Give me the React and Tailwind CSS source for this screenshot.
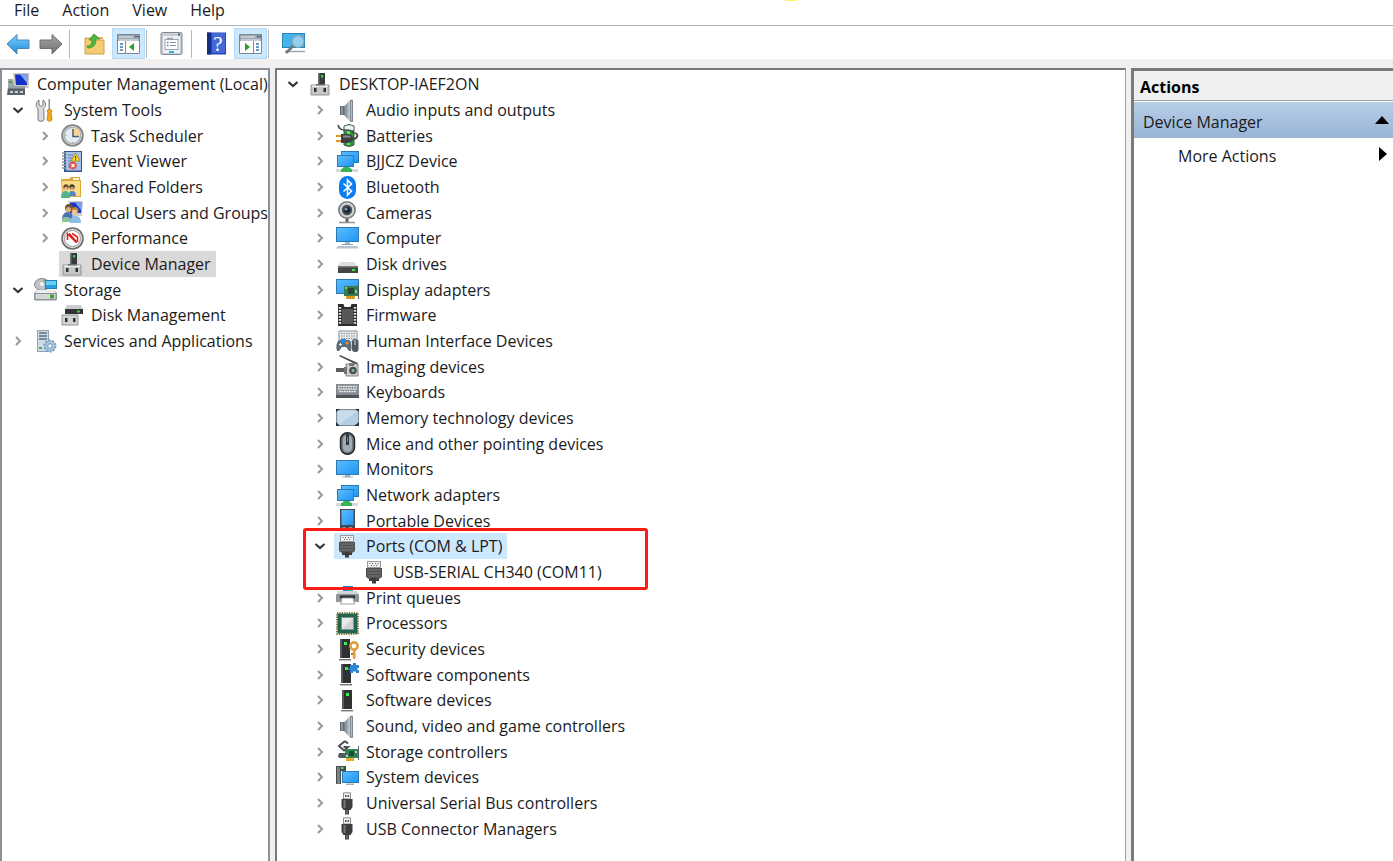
import React, { useState } from "react";

const Svg = ({ children }) => (
  <svg viewBox="0 0 23 23" className="size-[23px] shrink-0" aria-hidden="true">
    {children}
  </svg>
);

const Screen = ({ x, y, w, h }) => (
  <g>
    <rect x={x} y={y} width={w} height={h} fill="#2a7ab4" />
    <rect x={x + 1} y={y + 1} width={w - 2} height={h - 2} fill="url(#screenBlue)" />
  </g>
);

const Tower = ({ x = 6, y = 1 }) => (
  <g>
    <rect x={x} y={y} width="10" height="19" fill="#2f3133" />
    <path d={`M${x} ${y}h2v19h-2z`} fill="#55585a" />
    <rect x={x + 4} y={y + 3} width="3" height="3" fill="#3df04a" />
    <path d={`M${x - 1} ${y + 20}h12v1.400h-12z`} fill="#6f7375" />
  </g>
);

const NetScreens = () => (
  <Svg>
    <Screen x={5} y={1} w={18} h={12} />
    <Screen x={1} y={5} w={17} h={12} />
    <path d="M8 17h4v3H8z" fill="#2fa84a" />
    <path d="M0 19h22v3H0z" fill="#d5dad7" />
    <path d="M5 19.500 8 17h5l3 2.500V22H5z" fill="#38b555" />
  </Svg>
);

const PortPlug = () => (
  <Svg>
    <rect x="4.500" y=".5" width="13" height="6" fill="#efefef" stroke="#9a9a9a" />
    <path d="M6.500 2h1v1h-1zM9 2h1v1h-1zM12 2h1v1h-1zM14.500 2h1v1h-1zM8 4h1v1H8zM10.500 4h1v1h-1zM13 4h1v1h-1z" fill="#666" />
    <path d="M3 7h16v9l-3 2H6l-3-2z" fill="#505050" />
    <path d="M4 9h14M4 12h14M4 15h14" stroke="#7b7b7b" />
    <path d="M6 18h3v2H6zM13 18h3v2h-3zM9 17h4v5.500H9z" fill="#3b3b3b" />
  </Svg>
);

const UsbPlug = () => (
  <Svg>
    <path d="M7.500.8h7V7h-7z" fill="#f2f2f2" stroke="#8a8a8a" />
    <path d="M9 3h1.500v2H9zM11.500 3H13v2h-1.500z" fill="#555" />
    <path d="M5.500 7h11v8l-2 3h-1.500v4.500H9V18H7.500l-2-3z" fill="#3c3d3f" />
    <path d="M7.500 8h2v8h-2z" fill="#737577" />
    <path d="M10 18h2v4h-2z" fill="#66686a" />
  </Svg>
);

const Speaker = () => (
  <Svg>
    <path d="M4 7h4v9H4z" fill="#5f6a74" />
    <path d="M5 7.500h2v8H5z" fill="#8b97a1" />
    <path d="M8 7.500 14 1v21.500L8 16z" fill="url(#metal)" />
    <path d="M14 .8h3v22h-3z" fill="#7a858f" />
    <path d="M14.800 2h1.200v19.500h-1.200z" fill="#b3bcc4" />
  </Svg>
);

const icons = {
  computerManagement: (
    <Svg>
      <path d="M6 0h16.500l-1 15H8z" fill="#c9c9c2" />
      <path d="M8 1.500h12.500L20 12H9z" fill="#1430c8" />
      <path d="M13 1.500h7.500L20 10z" fill="#7fa6f5" />
      <path d="M1 6h5l2 8H1z" fill="#a3a9a8" />
      <path d="M2 8h3v2H2z" fill="#35b32f" />
      <path d="M1 14h17v8H0z" fill="#58636b" />
      <path d="M1 13h17v2.500H1z" fill="#98a3a8" />
      <path d="M3 18h3v2H3zM8 18h3v2H8zM13 18h3v2h-3z" fill="#cbd3d5" />
    </Svg>
  ),
  tools: (
    <Svg>
      <path d="M5 1v5l2 1.500L9 6V1c3 2 3.500 6 .8 8.500L10 21c-1 1.800-5 1.800-6 0V10C1 7 2 3 5 1z" fill="#d8dadc" stroke="#777c80" />
      <path d="M14.500 0H16v11h-1.500z" fill="#8b9196" />
      <path d="M13 12c0-2 5-2 5 0l-1 2 1 6c0 3-5 3-5 0l1-6z" fill="#f5a915" stroke="#bf7a0a" strokeWidth=".8" />
    </Svg>
  ),
  clock: (
    <Svg>
      <circle cx="11.500" cy="11.500" r="10.500" fill="#c4c5c5" stroke="#828485" strokeWidth="1.600" />
      <circle cx="11.500" cy="11.500" r="8" fill="#e3ecf5" stroke="#a6a8a9" />
      <path d="M11.500 3.500a8 8 0 0 1 8 8h-8z" fill="#f6d594" />
      <path d="M12 5v7.500h6" fill="none" stroke="#4a6172" strokeWidth="1.500" />
      <path d="M11 18h1v1h-1zM4.500 11h1v1h-1z" fill="#8796a2" />
    </Svg>
  ),
  event: (
    <Svg>
      <path d="M3 1h18v21H3z" fill="#34558f" />
      <path d="M5 2h15v18.500H5z" fill="#a6c0e6" />
      <path d="M7 5h5M7 8h5M7 11h5M7 14h3M7 17h3" stroke="#6484b4" />
      <path d="M1 3h4M1 6h4M1 9h4M1 12h4M1 15h4M1 18h4" stroke="#8e9498" strokeWidth="1.400" />
      <path d="m14.500 3 4.500 8H10z" fill="#ffd728" stroke="#a68912" strokeWidth=".8" />
      <path d="M14 6h1v2.500h-1zM14 9.300h1v1h-1z" fill="#333" />
      <circle cx="12" cy="15.500" r="3.800" fill="#e2504b" />
      <path d="m10.500 14 3 3m0-3-3 3" stroke="#fff" strokeWidth="1.200" />
    </Svg>
  ),
  shared: (
    <Svg>
      <path d="M0 3h8l2-2h9v3h1v17H1z" fill="#d9a73d" />
      <path d="M1 5h18v15H2z" fill="#fbdc86" />
      <path d="M12 2h6v2h-6z" fill="#fff4c6" />
      <circle cx="5" cy="11" r="2.700" fill="#6b4a2c" />
      <circle cx="5" cy="12.500" r="1.800" fill="#e8b78b" />
      <circle cx="11" cy="11" r="2.700" fill="#403b35" />
      <circle cx="11" cy="12.500" r="1.800" fill="#dca378" />
      <path d="M8 20c0-4 1-5 3-5s4 1 4 5z" fill="#4f88c9" />
      <path d="M0 22c0-5 2-7 4.500-7S9 17 9 22z" fill="#52b68b" />
    </Svg>
  ),
  users: (
    <Svg>
      <path d="M7 0h15l-1 15H9z" fill="#d0cfc6" />
      <path d="M9 1.500h11.500L20 12H9z" fill="#1735ce" />
      <path d="M14 1.500h6.500L20 9z" fill="#7ba4f4" />
      <circle cx="8" cy="7" r="4" fill="#6f5232" />
      <circle cx="7.500" cy="8.500" r="2.600" fill="#dfae7b" />
      <circle cx="14" cy="9.500" r="3.500" fill="#b98531" />
      <circle cx="13.500" cy="11" r="2.500" fill="#edc598" />
      <path d="M1 19c0-5 2-8 6-8s5 3 5 8z" fill="#4a71b5" />
      <path d="M1 21c0-4 1-5 4-5s5 1 5 5z" fill="#8fc49a" />
      <path d="M9 22c0-5 2-7 5.500-7s5.500 2 5.500 7z" fill="#8bbfe6" />
    </Svg>
  ),
  perf: (
    <Svg>
      <circle cx="11.500" cy="11.500" r="10.500" fill="#dedede" stroke="#6e6e6e" strokeWidth="1.600" />
      <circle cx="11.500" cy="11.500" r="8" fill="#fff" stroke="#9a9a9a" />
      <path d="M6.500 13V7l9 8.500M11 6.500l5.500 3.500v5" fill="none" stroke="#e32518" strokeWidth="1.600" />
      <path d="m8 6.500 8 9" stroke="#d81a12" strokeWidth="1.800" />
    </Svg>
  ),
  device: (
    <Svg>
      <path d="M2 12h18v10H2z" fill="#c4c6c7" stroke="#929596" />
      <path d="M3 12.500h16V14H3z" fill="#eceded" />
      <path d="M5 15h2.500v4H5zM14.500 15H17v4h-2.500z" fill="#2f3132" />
      <rect x="9" y="0" width="7" height="12" fill="#393c3d" />
      <path d="M9 0h1.500v12H9z" fill="#6f7375" />
      <path d="M7 11h9v1.500H7z" fill="#6c7072" />
      <rect x="12" y="2" width="2" height="2.500" fill="#38d843" />
    </Svg>
  ),
  storage: (
    <Svg>
      <ellipse cx="8" cy="6.500" rx="7.500" ry="6" fill="#bfc3c5" stroke="#85898b" />
      <circle cx="8" cy="6" r="2" fill="#f5f5f5" />
      <path d="m9 1 3 1-3 4z" fill="#88bf7d" />
      <path d="M11 2h12v9H11z" fill="#1b83b9" />
      <path d="M12 3h10v7H12z" fill="#6ccdf3" />
      <path d="M12 7h10v3H12z" fill="#2aa1dd" />
      <path d="M3 12h17l3 3v6q0 1.500-1.500 1.500h-20Q0 22.500 0 21v-6z" fill="#8f9496" />
      <path d="M3 12h17l2 3H1z" fill="#eceeee" />
      <path d="M1.500 16h20v5h-20z" fill="#d4d7d8" />
      <path d="M16 16.500h4v4h-4z" fill="#41a22a" />
    </Svg>
  ),
  diskMgmt: (
    <Svg>
      <path d="M6 1h14l2 4H4z" fill="#c9cccd" />
      <path d="M4 5h18v5H4z" fill="#313435" />
      <path d="M16 6.500h3v2h-3z" fill="#36cf3d" />
      <path d="M1 11h16v10H1z" fill="#d0d2d3" stroke="#929596" />
      <path d="M4 14h2.500v4H4zM12 14h2.500v4H12z" fill="#303234" />
    </Svg>
  ),
  services: (
    <Svg>
      <path d="M3 0h12v22H3z" fill="#8fa3b5" />
      <path d="M4 1h10v20H4z" fill="#cfdce6" />
      <path d="M5 3h8M5 6h8M5 9h8" stroke="#5b6f82" strokeWidth="1.400" />
      <path d="M5 17h3v2H5z" fill="#3db34c" />
      <circle cx="16" cy="16" r="5.500" fill="#a9c7e4" stroke="#7ea0be" strokeWidth="2" strokeDasharray="2.200 1.200" />
      <circle cx="16" cy="16" r="2.300" fill="#edf4fa" stroke="#6c95bb" />
    </Svg>
  ),
  speaker: <Speaker />,
  battery: (
    <Svg>
      <path d="M8 2q5-3 10 0v19q-5 3-10 0z" fill="#239a35" stroke="#4b534d" />
      <path d="M8.500 2.500q4.500-2.500 9 0V6q-4.500 1-9 0z" fill="#eef2ef" />
      <path d="M11 7h3v14h-3z" fill="#68dc6d" />
      <path d="M2 1c1 5 5 5 8 5s7 0 8 4" fill="none" stroke="#4a4a4a" strokeWidth="1.600" />
      <path d="M0 12h6M0 17h6" stroke="#d89b25" strokeWidth="2" />
      <path d="M5 10h5c5 0 7 2 7 4.500S15 19 10 19H5z" fill="#3d3f40" />
      <path d="M7 11.500h4c3 0 4 1 4 2H7z" fill="#8b8d8f" />
      <path d="M16 15c6 0 7-5 3-6" fill="none" stroke="#444" strokeWidth="1.800" />
    </Svg>
  ),
  net: <NetScreens />,
  bluetooth: (
    <Svg>
      <rect x="3" y="0" width="17" height="23" rx="8.500" fill="#0a7cf5" />
      <path d="m7.500 7.500 8 7.500-4 4V4l4 4-8 7.500" fill="none" stroke="#fff" strokeWidth="1.600" />
    </Svg>
  ),
  camera: (
    <Svg>
      <circle cx="11" cy="9" r="8.200" fill="#d0d1d1" stroke="#777a7b" strokeWidth="1.600" />
      <circle cx="11" cy="9" r="5.200" fill="#454b52" />
      <circle cx="11" cy="9" r="3" fill="#18202c" />
      <circle cx="10" cy="8" r="1.600" fill="#7b9cc6" />
      <path d="M9.500 17.500h3V21h-3z" fill="#606364" />
      <path d="M3 21.500h16" stroke="#8e9191" strokeWidth="1.500" />
    </Svg>
  ),
  computer: (
    <Svg>
      <Screen x={0} y={0} w={23} h={15} />
      <path d="M9 15h5v2H9z" fill="#a9bac9" />
      <path d="M6 17h11v1H6z" fill="#8fa2b3" />
      <path d="M2 19h19l2 2.500H0z" fill="#b5c4d1" />
    </Svg>
  ),
  disk: (
    <Svg>
      <path d="M5 9h13l4 4H1z" fill="#dedede" />
      <path d="M2 13h20v7H2z" fill="#434546" />
      <path d="M2 13h20v1.500H2z" fill="#77797a" />
      <path d="M16 16h3v2h-3z" fill="#3bea45" />
    </Svg>
  ),
  display: (
    <Svg>
      <Screen x={0} y={1} w={23} h={15} />
      <path d="M8 8h14v10H8z" fill="#357d4d" />
      <path d="M12 10h6v6h-6z" fill="#29463a" />
      <path d="M9 9h2v2H9zM19 12h2v3h-2z" fill="#92c59f" />
      <path d="M22 7h1v14h-1z" fill="#4c5958" />
      <path d="M10 18h9v3h-9z" fill="#eda922" />
      <path d="M12 18v3M14.500 18v3M17 18v3" stroke="#b1730a" strokeWidth=".7" />
    </Svg>
  ),
  firmware: (
    <Svg>
      <path d="M2 0h5.500l1 3h6l1-3H21v22H2z" fill="#2c2d2e" />
      <path d="M6 5h11v15H6z" fill="#565758" />
      <path d="M4 3v18M19 3v18" stroke="#e2e2e2" strokeWidth="2.400" strokeDasharray="1.800 1.200" />
    </Svg>
  ),
  hid: (
    <Svg>
      <path d="M3 1h18v11H3z" fill="#e6e9ec" stroke="#8a9299" />
      <path d="M5 3.500h14M5 6h14M5 8.500h14" stroke="#8d959c" strokeDasharray="1.500 1" />
      <path d="M3 10h10c3 3 3 7 2 11h-2l-3-4H6l-3 4H1c-1-4-1-8 2-11z" fill="#5e6b78" />
      <path d="M5 9h5v4H5z" fill="#1a8ce8" />
      <circle cx="11" cy="13" r="1.500" fill="#f09127" />
      <path d="M4.500 13v3M3 14.500h3" stroke="#e2e7ed" />
      <rect x="16" y="9" width="6.500" height="13" rx="3" fill="#515a62" />
      <path d="M19 10v5" stroke="#bec5cb" strokeWidth="1.300" />
    </Svg>
  ),
  imaging: (
    <Svg>
      <path d="m3 1 1-1 18 8-1 2z" fill="#4a4c4d" />
      <path d="M10 9h12v12H10z" fill="#cfd0d0" stroke="#818384" />
      <path d="M13 8h5v3h-5z" fill="#777a7b" />
      <circle cx="17" cy="15.500" r="3.800" fill="#4b4d4f" />
      <circle cx="17" cy="15.500" r="1.600" fill="#75b7a4" />
      <path d="M0 13h8v4H0z" fill="#5c5e5f" />
      <path d="M8 12h3v7H8z" fill="#737576" />
    </Svg>
  ),
  keyboard: (
    <Svg>
      <path d="M0 3h23v11H0z" fill="#858b90" />
      <path d="M0 14h23v3H0z" fill="#4e5459" />
      <path d="M2 5.500h19M2 8h19M3 10.500h17" stroke="#eef0f1" strokeWidth="1.300" strokeDasharray="1.800 .7" />
    </Svg>
  ),
  memory: (
    <Svg>
      <rect x=".5" y="2.500" width="22" height="16" rx="1.500" fill="#b6cee1" stroke="#7890a2" />
      <path d="M2 4h19L4 17H2z" fill="#cadcea" />
      <path d="M0 5V2h4zM19 2h4v3zM0 15v4h4zM18 19h5v-4z" fill="#2e3335" />
    </Svg>
  ),
  mouse: (
    <Svg>
      <rect x="4.500" y="0.800" width="14" height="21.500" rx="7" fill="#6b7681" stroke="#22272b" strokeWidth="1.500" />
      <rect x="7" y="3" width="9" height="17" rx="4.500" fill="#a0abb6" />
      <path d="M10 2h3v11h-3z" fill="#2e3337" />
      <path d="M11 5h1v5h-1z" fill="#7b848b" />
    </Svg>
  ),
  monitor: (
    <Svg>
      <Screen x={0} y={2} w={23} h={15} />
      <path d="M9 17h5v1.500H9zM6 18.500h11v1H6z" fill="#9cb1c1" />
    </Svg>
  ),
  portable: (
    <Svg>
      <path d="M4 0h15v21H4z" fill="#464a50" />
      <path d="M5.500 1h12v15h-12z" fill="url(#screenBlue)" />
      <path d="M6.500 18h3v2h-3zM13 18h3v2h-3z" fill="#8e959c" />
    </Svg>
  ),
  port: <PortPlug />,
  printer: (
    <Svg>
      <path d="M7 0h10v7H7z" fill="#198ce7" />
      <path d="M12 2h5v5h-5z" fill="#2bc3a6" />
      <path d="M3 5h17l3 4v7H0V9z" fill="#8f9599" />
      <path d="M3 5h17l2 3H1z" fill="#d3d6d8" />
      <path d="M4 9.500h15v3H4z" fill="#292d30" />
      <path d="M6 12h11l1.500 6h-14z" fill="#fff" stroke="#9b9fa2" />
    </Svg>
  ),
  cpu: (
    <Svg>
      <rect x="1" y="1" width="21" height="21" fill="none" stroke="#8d7d3a" strokeWidth="2" strokeDasharray="1.200 1.200" />
      <path d="M1.500 1.500h20v20h-20z" fill="#24644d" />
      <path d="M5 5h13v13H5z" fill="#7b988b" />
      <path d="M6 6h11v11H6z" fill="#cfd4d2" />
      <path d="M6 6h11L6 17z" fill="#e6e9e8" />
    </Svg>
  ),
  security: (
    <Svg>
      <Tower x={4} y={1} />
      <circle cx="18" cy="8" r="3.600" fill="#fff" stroke="#dba245" strokeWidth="2.600" />
      <path d="M16.800 12h2.800v8l-1.500 1.500-1.300-1.500z" fill="#e0a23a" />
      <path d="M15 15h2v2h-2z" fill="#b97818" />
    </Svg>
  ),
  softComp: (
    <Svg>
      <Tower x={5} y={1} />
      <path d="M14 2h3V0h3v2h3v3h-1.500v2H23v3h-3V8.500h-3V10h-3V7h-1.500V5H14z" fill="#2f86d2" />
    </Svg>
  ),
  softDev: (
    <Svg>
      <Tower x={6} y={1} />
    </Svg>
  ),
  storageCtl: (
    <Svg>
      <path d="M9 1 3 6l5 4.500L12 7H7.500M9 1l3 2.500" fill="none" stroke="#4d5051" strokeWidth="2" />
      <path d="M3 13h8v5H3l-1-2z" fill="#54595b" />
      <path d="M9 9h13v9H9z" fill="#2f8455" />
      <path d="M13 11h5v5h-5z" fill="#1c4d37" />
      <path d="M19 11h2v2h-2zM10 15h2v2h-2z" fill="#b1d7bd" />
      <path d="M22 6h1v14h-1z" fill="#626767" />
      <path d="M10 18h8v3h-8z" fill="#eda922" />
    </Svg>
  ),
  system: (
    <Svg>
      <path d="M0 0h10v18H0z" fill="#464b4f" />
      <path d="M1 1h3v17H1z" fill="#7c8388" />
      <path d="M5 1h2.500v2H5z" fill="#3fe34a" />
      <path d="M5 5h18v13H5z" fill="#fff" />
      <Screen x={6} y={5} w={17} h={12} />
      <path d="M10 17.500h8V19h-8z" fill="#9cb1c1" />
    </Svg>
  ),
  usb: <UsbPlug />,
};

const consoleTree = [
  { level: 0, icon: "computerManagement", label: "Computer Management (Local)" },
  { level: 1, icon: "tools", label: "System Tools", state: "open" },
  { level: 2, icon: "clock", label: "Task Scheduler", state: "closed" },
  { level: 2, icon: "event", label: "Event Viewer", state: "closed" },
  { level: 2, icon: "shared", label: "Shared Folders", state: "closed" },
  { level: 2, icon: "users", label: "Local Users and Groups", state: "closed" },
  { level: 2, icon: "perf", label: "Performance", state: "closed" },
  { level: 2, icon: "device", label: "Device Manager", mark: "bg-[#d9d9d9]" },
  { level: 1, icon: "storage", label: "Storage", state: "open" },
  { level: 2, icon: "diskMgmt", label: "Disk Management" },
  { level: 1, icon: "services", label: "Services and Applications", state: "closed" },
];

const category = (icon, label) => ({ level: 2, icon, label, state: "closed" });

const deviceTree = [
  { level: 1, icon: "device", label: "DESKTOP-IAEF2ON", state: "open" },
  category("speaker", "Audio inputs and outputs"),
  category("battery", "Batteries"),
  category("net", "BJJCZ Device"),
  category("bluetooth", "Bluetooth"),
  category("camera", "Cameras"),
  category("computer", "Computer"),
  category("disk", "Disk drives"),
  category("display", "Display adapters"),
  category("firmware", "Firmware"),
  category("hid", "Human Interface Devices"),
  category("imaging", "Imaging devices"),
  category("keyboard", "Keyboards"),
  category("memory", "Memory technology devices"),
  category("mouse", "Mice and other pointing devices"),
  category("monitor", "Monitors"),
  category("net", "Network adapters"),
  category("portable", "Portable Devices"),
  { level: 2, icon: "port", label: "Ports (COM & LPT)", state: "open", mark: "bg-[#cce8ff]", outlined: true },
  { level: 3, icon: "port", label: "USB-SERIAL CH340 (COM11)" },
  category("printer", "Print queues"),
  category("cpu", "Processors"),
  category("security", "Security devices"),
  category("softComp", "Software components"),
  category("softDev", "Software devices"),
  category("speaker", "Sound, video and game controllers"),
  category("storageCtl", "Storage controllers"),
  category("system", "System devices"),
  category("usb", "Universal Serial Bus controllers"),
  category("usb", "USB Connector Managers"),
];

const indents = ["pl-[5px]", "pl-[5px]", "pl-8", "pl-[59px]"];

const Chevron = ({ open }) =>
  open ? (
    <svg viewBox="0 0 12 12" className="size-3" aria-hidden="true">
      <path d="m1.500 4 4.500 4 4.500-4" fill="none" stroke="#333" strokeWidth="2.200" />
    </svg>
  ) : (
    <svg viewBox="0 0 12 12" className="size-3" aria-hidden="true">
      <path d="m4 2 4 4-4 4" fill="none" stroke="#999" strokeWidth="2" />
    </svg>
  );

function Tree({ label, nodes }) {
  return (
    <ul role="tree" aria-label={label} className="grid auto-rows-[26px_26px_25px]">
      {nodes.map((n) => (
        <li
          key={n.label}
          role="treeitem"
          aria-level={n.level + 1}
          aria-selected={Boolean(n.mark)}
          aria-expanded={n.state ? n.state === "open" : undefined}
          className={`relative flex items-center ${indents[n.level]}`}
        >
          {n.level > 0 && (
            <span className="flex w-[27px] shrink-0 items-center pl-[5px]">
              {n.state && (
                <button type="button" aria-label={`Toggle ${n.label}`} className="flex">
                  <Chevron open={n.state === "open"} />
                </button>
              )}
            </span>
          )}
          <span className={`-ml-0.5 flex h-full items-center gap-[7px] pr-[5px] pl-0.5 whitespace-nowrap ${n.mark || ""}`}>
            {icons[n.icon]}
            <span>{n.label}</span>
          </span>
          {n.outlined && (
            <span
              aria-hidden="true"
              className="pointer-events-none absolute -top-[5px] left-[26px] z-10 h-[62px] w-[345px] rounded-[3px] border-[3px] border-[#fb1c14]"
            />
          )}
        </li>
      ))}
    </ul>
  );
}

const toolIcons = {
  back: (
    <svg viewBox="0 0 24 22" className="h-[22px] w-6" aria-hidden="true">
      <path d="M1 11 11 1.500V7h12v8.500H11V21z" fill="url(#backBlue)" stroke="#4d87b0" />
    </svg>
  ),
  forward: (
    <svg viewBox="0 0 24 22" className="h-[22px] w-6" aria-hidden="true">
      <path d="M23 11 13 1.500V7H1v8.500h12V21z" fill="url(#fwdGray)" stroke="#707070" />
    </svg>
  ),
  up: (
    <Svg>
      <path d="M2 6h8l2 2h9v14H2z" fill="#f3cd70" stroke="#c9a050" />
      <path d="M16 5h4v2h-4z" fill="#e7b64c" />
      <path d="M4 14c5 0 5-4 5-6H6l5-6 6 5h-4c0 6-3 9-8 9z" fill="#4fb540" stroke="#3b9433" strokeWidth=".8" />
    </Svg>
  ),
  treePane: (
    <Svg>
      <path d="M.5 2.500h22v19H.5z" fill="#fff" stroke="#7d8995" />
      <path d="M1 3h21v6H1z" fill="#9aa6b2" />
      <path d="M2 5h14M2 8h19" stroke="#eef2f5" />
      <path d="M18 4.500h1.500M20.500 4.500H22" stroke="#42505d" strokeWidth="1.500" />
      <path d="M8.500 9v12" stroke="#7d8995" />
      <path d="M3 12h3M3 15h3M3 18h3" stroke="#3e78ac" strokeWidth="1.400" />
      <path d="M17 11v8l-5-4z" fill="#33a02c" />
    </Svg>
  ),
  properties: (
    <Svg>
      <rect x="1" y=".5" width="21" height="22" rx="1.500" fill="#c9ced4" stroke="#7f878f" />
      <path d="M3 4h17v17H3z" fill="#eef1f4" />
      <path d="M18 1.500h2v2h-2z" fill="#555f68" />
      <rect x="5" y="7.500" width="13" height="10" fill="#fff" stroke="#9ba4ad" />
      <path d="M7 6.500h6" stroke="#9ba4ad" strokeWidth="1.500" />
      <path d="M10 10.500h6M10 13.500h6" stroke="#87919a" />
      <path d="M7 10.500h1.500M7 13.500h1.500" stroke="#2b8fd3" strokeWidth="1.300" />
      <path d="M9 19h5v2H9z" fill="#27b2e8" />
    </Svg>
  ),
  help: (
    <Svg>
      <path d="M2 .5h19v22H2z" fill="#2745b5" />
      <path d="M2 .5h4v22H2z" fill="#152f86" />
      <path d="M7 1h13v20H7z" fill="#4468d8" />
      <text x="13" y="18.500" textAnchor="middle" fontSize="21" fontWeight="500" fontFamily="Liberation Serif, serif" fill="#fff">
        ?
      </text>
    </Svg>
  ),
  actionPane: (
    <Svg>
      <path d="M.5 2.500h22v19H.5z" fill="#fff" stroke="#7d8995" />
      <path d="M1 3h21v6H1z" fill="#9aa6b2" />
      <path d="M2 5h14M2 8h19" stroke="#eef2f5" />
      <path d="M18 4.500h1.500M20.500 4.500H22" stroke="#42505d" strokeWidth="1.500" />
      <path d="M14.500 9v12" stroke="#7d8995" />
      <path d="M17 12h3M17 15h3M17 18h3" stroke="#3e78ac" strokeWidth="1.400" />
      <path d="M6 11v8l5-4z" fill="#33a02c" />
    </Svg>
  ),
  scan: (
    <svg viewBox="0 0 25 23" className="h-[23px] w-[25px]" aria-hidden="true">
      <path d="M1 1h23v15H1z" fill="#2583b5" />
      <path d="M2 2h21v13H2z" fill="#45b2e9" />
      <path d="M4 19.500h20" stroke="#9aa9b3" strokeWidth="1.500" />
      <path d="m13 13-8 8" stroke="#677985" strokeWidth="2.500" />
      <circle cx="17" cy="9.500" r="5.800" fill="#8fd0f3" stroke="#8fa5b3" strokeWidth="1.300" />
    </svg>
  ),
};

function Tool({ icon, label, active, className = "" }) {
  const [on, setOn] = useState(Boolean(active));
  const tone = on ? "bg-[#cce8ff] outline outline-1 -outline-offset-1 outline-[#b4dcfa]" : "";
  return (
    <button
      type="button"
      aria-label={label}
      aria-pressed={active ? on : undefined}
      onClick={active ? () => setOn(!on) : undefined}
      className={`flex h-[31px] w-[33px] items-center justify-center ${tone} ${className}`}
    >
      {toolIcons[icon]}
    </button>
  );
}

const Divider = ({ className = "" }) => <span className={`h-7 w-px bg-[#b5b5b5] ${className}`} />;

export default function App() {
  return (
    <div className="flex min-h-screen flex-col bg-[#f0f0f0] font-['Open_Sans','Noto_Sans',sans-serif] text-base leading-6 text-[#1b1b1b]">
      <svg className="absolute size-0" aria-hidden="true">
        <defs>
          <linearGradient id="screenBlue" x1="0" y1="0" x2="1" y2="1">
            <stop offset="0" stopColor="#5cbcff" />
            <stop offset="1" stopColor="#1f96f3" />
          </linearGradient>
          <linearGradient id="metal">
            <stop offset="0" stopColor="#6f7b86" />
            <stop offset="1" stopColor="#c8cfd5" />
          </linearGradient>
          <linearGradient id="backBlue" x1="0" y1="0" x2="0" y2="1">
            <stop offset="0" stopColor="#7fd0fb" />
            <stop offset="1" stopColor="#1c8ade" />
          </linearGradient>
          <linearGradient id="fwdGray" x1="0" y1="0" x2="0" y2="1">
            <stop offset="0" stopColor="#a5a5a5" />
            <stop offset="1" stopColor="#707070" />
          </linearGradient>
        </defs>
      </svg>

      <nav aria-label="Menu" className="relative flex h-[26px] items-start gap-[23px] border-b border-[#b0b0b0] bg-white pl-3.5 leading-5">
        <button type="button">File</button>
        <button type="button">Action</button>
        <button type="button">View</button>
        <button type="button">Help</button>
        <span aria-hidden="true" className="absolute top-0 left-[785px] h-px w-3 bg-[#fbf36b]" />
      </nav>

      <div role="toolbar" aria-label="Tools" className="flex h-[33px] items-center bg-white pt-0.5 pl-0.5">
        <Tool icon="back" label="Back" className="-ml-px" />
        <Tool icon="forward" label="Forward" />
        <Divider className="ml-0.5" />
        <Tool icon="up" label="Up one level" className="ml-2" />
        <Tool icon="treePane" label="Show or hide console tree" active className="ml-px" />
        <Divider className="ml-px" />
        <Tool icon="properties" label="Properties" className="ml-2" />
        <Divider className="ml-[3px]" />
        <Tool icon="help" label="Help" className="ml-2" />
        <Tool icon="actionPane" label="Show or hide action pane" active className="ml-px" />
        <Divider className="ml-px" />
        <Tool icon="scan" label="Scan for hardware changes" className="ml-2" />
      </div>

      <main className="flex flex-1 gap-[5px] pt-[9px]">
        <section className="w-[270px] shrink-0 border-x-2 border-t-2 border-[#8b8f97] bg-white pt-px">
          <Tree label="Console tree" nodes={consoleTree} />
        </section>

        <section className="min-w-0 flex-1 border-t-2 border-r border-l-2 border-t-[#7a7a7a] border-r-[#a0a0a0] border-l-[#7a7a7a] bg-white pt-px">
          <Tree label="Devices" nodes={deviceTree} />
        </section>

        <aside className="w-[262px] shrink-0 border-t-[3px] border-l-[3px] border-[#7a7a7a] bg-white">
          <h2 className="border-b border-[#a0a0a0] bg-[#f0f0f0] pt-1 pb-px pl-1.5 font-bold text-black">Actions</h2>
          <button
            type="button"
            className="mt-px flex h-9 w-full items-center justify-between bg-linear-to-b from-[#b8cee9] to-[#98b4d4] pr-1 pl-[9px]"
          >
            <span className="pt-[3px]">Device Manager</span>
            <svg viewBox="0 0 14 8" className="h-2 w-3.5" aria-hidden="true">
              <path d="M0 8 7 0l7 8z" fill="#000" />
            </svg>
          </button>
          <button type="button" className="flex h-9 w-full items-center justify-between pr-1.5 pl-11">
            More Actions
            <svg viewBox="0 0 8 14" className="mb-1 h-3.5 w-2" aria-hidden="true">
              <path d="M0 0v14l8-7z" fill="#000" />
            </svg>
          </button>
        </aside>
      </main>
    </div>
  );
}
